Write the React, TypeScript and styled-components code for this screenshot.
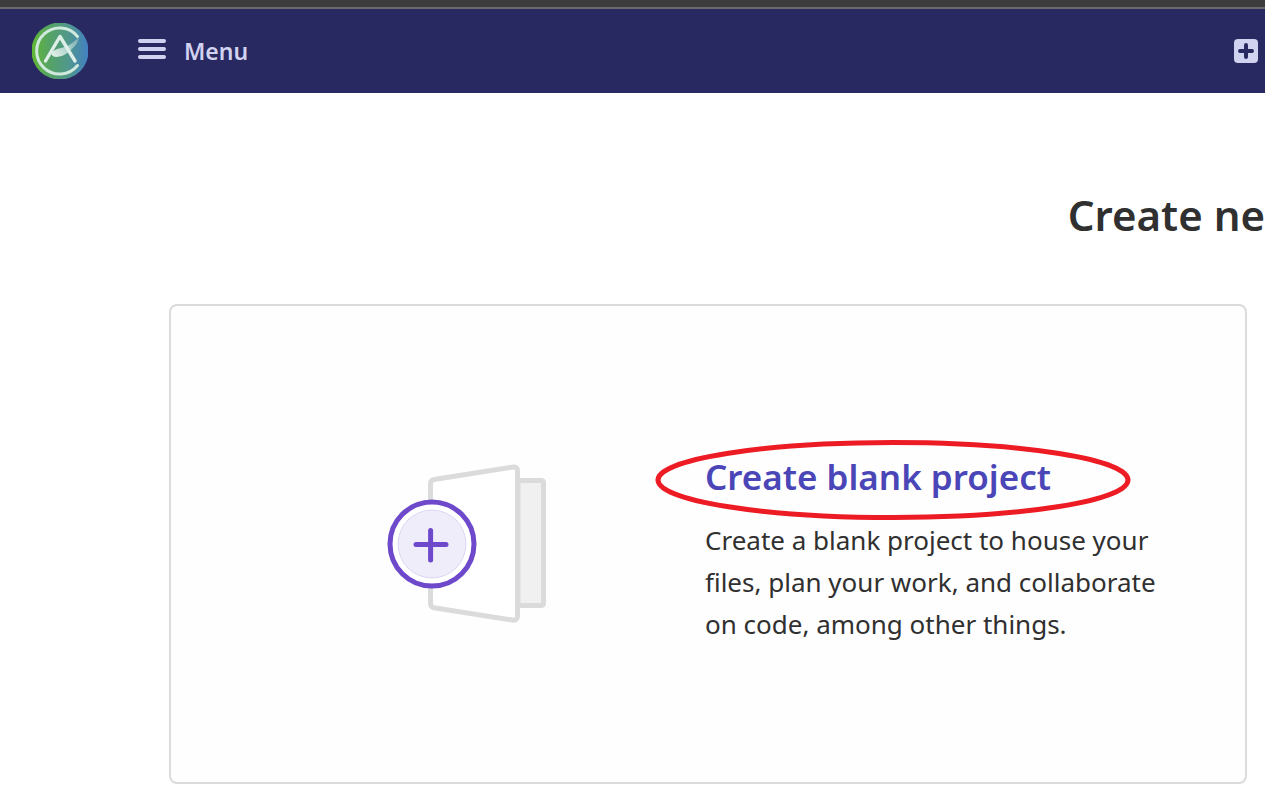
import React from "react";
import styled, { createGlobalStyle } from "styled-components";

const GlobalStyle = createGlobalStyle`
  * { box-sizing: border-box; }
  body {
    margin: 0;
    background: #fff;
    color: #303030;
    font-family: "Segoe UI", "Noto Sans", "Open Sans", sans-serif;
    overflow-x: hidden;
  }
`;

const WindowEdge = styled.div`
  height: 9px;
  background: #3c3c3c;
  border-bottom: 2px solid #6a6a6a;
`;

const Navbar = styled.header`
  display: flex;
  align-items: center;
  height: 84px;
  padding: 0 7px 0 32px;
  background: #292961;
`;

const LogoLink = styled.a`
  display: block;
  height: 56px;
  margin-right: 50px;
`;

const NavButton = styled.button`
  display: flex;
  align-items: center;
  gap: 18px;
  padding: 0;
  border: 0;
  background: none;
  color: #d1d1f0;
  font: 600 23px/32px "Segoe UI", "Noto Sans", sans-serif;
  cursor: pointer;

  svg { display: block; }
`;

const NewButton = styled(NavButton)`
  margin-left: auto;
`;

const Main = styled.main`
  padding: 92px 18px 8px 169px;
`;

const PageTitle = styled.h1`
  margin: 0 -18px 59px 0;
  font-size: 42px;
  font-weight: 600;
  line-height: 60px;
  text-align: right;
  white-space: nowrap;
`;

const Card = styled.section`
  display: grid;
  grid-template-columns: 1fr 1fr;
  align-items: center;
  min-height: 480px;
  padding: 0 63px 0 57px;
  border: 2px solid #dbdbdb;
  border-radius: 8px;
  background: #fefefe;
`;

const Illustration = styled.svg`
  display: block;
  justify-self: center;
`;

const CardBody = styled.div`
  padding-top: 10px;
`;

const CardTitle = styled.h2`
  position: relative;
  margin: 0 0 18px;
  font-size: 35px;
  font-weight: 600;
  line-height: 48px;
`;

const CardLink = styled.a`
  color: #4b46b8;
  text-decoration: none;
`;

const Highlight = styled.svg`
  position: absolute;
  top: -13px;
  left: -50px;
  pointer-events: none;
`;

const CardText = styled.p`
  margin: 0;
  font-size: 26px;
  line-height: 42px;
`;

function Logo() {
  return (
    <svg width="56" height="56" viewBox="0 0 56 56" fill="none" aria-hidden="true">
      <defs>
        <linearGradient id="disc" x1="0" y1="0" x2="1" y2="0">
          <stop offset="0" stopColor="#62b832" />
          <stop offset="0.3" stopColor="#55a463" />
          <stop offset="0.65" stopColor="#50978d" />
          <stop offset="1" stopColor="#4280c3" />
        </linearGradient>
        <linearGradient id="swoosh" x1="20" y1="32" x2="46" y2="14" gradientUnits="userSpaceOnUse">
          <stop offset="0" stopColor="#f4faf7" />
          <stop offset="0.5" stopColor="#b9d9d3" />
          <stop offset="1" stopColor="#7fb0b6" />
        </linearGradient>
      </defs>
      <circle cx="28" cy="28" r="28.5" fill="url(#disc)" />
      <path d="M45.500 13.5A23 23 0 1 0 45.500 42.500" stroke="#cfe9dc" strokeWidth="3" strokeLinecap="round" />
      <path d="M19.500 31C20 26.500 28 25.500 34 23.500C40 21 44 17 46.500 14.500C47 20 41 25 36 29.500C31 34 20.500 36 19.500 31Z" fill="url(#swoosh)" opacity="0.9" />
      <path d="M13.500 38L28 13.500L43 38" stroke="#deefe9" strokeWidth="3.4" strokeLinecap="round" strokeLinejoin="round" />
    </svg>
  );
}

export default function App() {
  return (
    <>
      <GlobalStyle />
      <WindowEdge />
      <Navbar>
        <LogoLink href="#" aria-label="Home">
          <Logo />
        </LogoLink>
        <NavButton type="button">
          <svg width="28" height="24" viewBox="0 0 28 24" fill="currentColor" aria-hidden="true">
            <rect y="0" width="28" height="4" rx="2" />
            <rect y="8" width="28" height="4" rx="2" />
            <rect y="16" width="28" height="4" rx="2" />
          </svg>
          Menu
        </NavButton>
        <NewButton type="button" aria-label="Create new">
          <svg width="24" height="24" viewBox="0 0 24 24" aria-hidden="true">
            <rect width="24" height="24" rx="4" fill="#d1d1f0" />
            <path d="M12 6V18M6 12H18" stroke="#292961" strokeWidth="4" strokeLinecap="round" />
          </svg>
        </NewButton>
      </Navbar>
      <Main>
        <PageTitle>Create ne</PageTitle>
        <Card>
          <Illustration width="162" height="162" viewBox="386 463 162 162" fill="none" aria-hidden="true">
            <path d="M518 480.500H541Q543.500 480.500 543.500 483V603Q543.500 605.500 541 605.500H518Z" fill="#f0f0f0" stroke="#dbdbdb" strokeWidth="5" />
            <path d="M434 479.500L512 467.200Q517.500 466 517.500 471V616Q517.500 621 512 620L434 607.800Q430.500 607 430.500 603V484Q430.500 480 434 479.500Z" fill="#fff" stroke="#dbdbdb" strokeWidth="5" strokeLinejoin="round" />
            <circle cx="432" cy="544" r="42" fill="#fff" stroke="#6e49cb" strokeWidth="5" />
            <circle cx="432" cy="544" r="34" fill="#f0edfa" stroke="#cbbfec" strokeWidth="0.6" />
            <path d="M430.600 530.500V560M416 544.600H446" stroke="#6e49cb" strokeWidth="5" strokeLinecap="round" />
          </Illustration>
          <CardBody>
            <CardTitle>
              <CardLink href="#">Create blank project</CardLink>
              <Highlight width="476" height="80" viewBox="0 0 476 80" fill="none" aria-hidden="true">
                <ellipse cx="238" cy="40" rx="235" ry="37.500" stroke="#ed1c24" strokeWidth="5" />
              </Highlight>
            </CardTitle>
            <CardText>
              Create a blank project to house your files, plan your work, and collaborate on code, among other things.
            </CardText>
          </CardBody>
        </Card>
      </Main>
    </>
  );
}
